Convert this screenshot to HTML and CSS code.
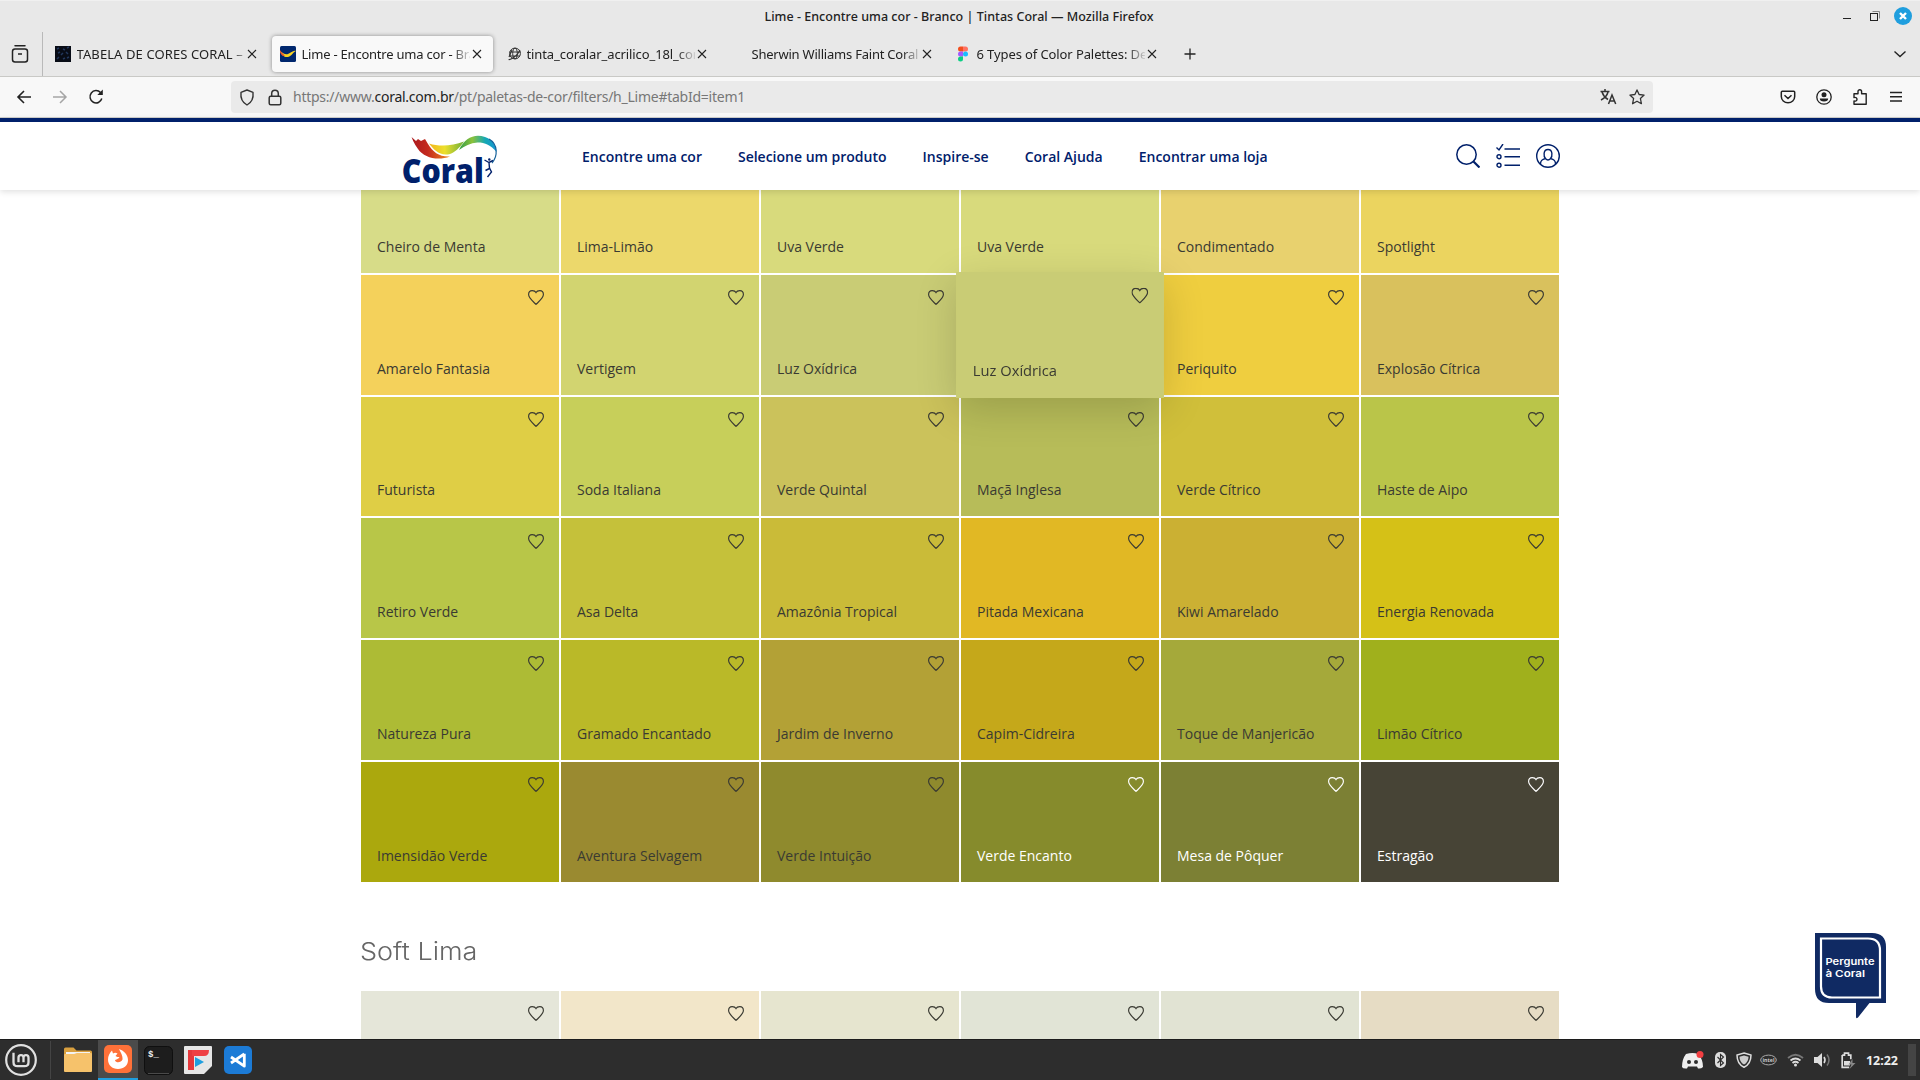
FILE: index.html
```html
<!DOCTYPE html>
<html lang="pt-BR">
<head>
<meta charset="utf-8">
<title>Lime - Encontre uma cor - Branco | Tintas Coral</title>
<link rel="stylesheet" href="styles.css">
</head>
<body>
<svg class="defs" width="0" height="0">
  <symbol id="heart" viewBox="0 0 16 15"><path d="M8 14.400C5 11.400.6 8 .6 4.600.6 2.200 2.200.6 4.200.6 6.100.6 7.300 1.100 8 2.500 8.700 1.100 9.900.6 11.800.6c2 0 3.600 1.600 3.600 4C15.400 8 11 11.400 8 14.400z" fill="none" stroke="currentColor" stroke-width="1.150"/></symbol>
  <symbol id="x" viewBox="0 0 10 10"><path d="M1 1l8 8M9 1l-8 8" stroke="#222" stroke-width="1.100" fill="none"/></symbol>
</svg>

<div class="titlebar">
  <span class="title-side"></span>
  <span class="win-title">Lime - Encontre uma cor - Branco | Tintas Coral — Mozilla Firefox</span>
  <span class="title-side win-buttons">
    <svg width="10" height="12"><path d="M0 8.500h8" stroke="#222"/></svg>
    <svg width="10" height="10"><path d="M2.500.5h7v7" fill="none" stroke="#888"/><rect x=".5" y="2.500" width="7" height="7" fill="none" stroke="#222"/></svg>
    <svg width="18" height="18"><circle cx="9" cy="9" r="9" fill="#1f9ede"/><path d="M6 6l6 6M12 6l-6 6" stroke="#fff" stroke-width="2.400"/></svg>
  </span>
</div>

<div class="tabstrip">
  <div class="firefox-view"><svg width="18" height="20" viewBox="0 0 18 20" fill="none" stroke="#222" stroke-width="1.500"><path d="M4 1.800h10" stroke-linecap="round"/><rect x="1.500" y="5" width="15" height="13" rx="2.500"/><path d="M7 10h4"/></svg></div>
  <div class="tab">
    <svg width="16" height="16"><rect width="16" height="16" fill="#080c16"/><path d="M2 3l2-1M8 3l2 1M12 2l2-1M3 7l2-1M6 9l2-2M11 6l2 2M2 13l2-2M8 13l2-1M12 12l2-1" stroke="#22375c" stroke-width="1.500"/></svg>
    <span class="tab-label whole">TABELA DE CORES CORAL –</span><svg class="tab-x"><use href="#x"/></svg>
  </div>
  <div class="tab active">
    <svg width="16" height="16"><rect width="16" height="16" rx="1.500" fill="#00276e"/><path d="M0 5c3 2 5 4 8 3s5-4 8-3c-3 1-4 5-8 6-4 .6-6-2-8-6z" fill="#f9d423"/><path d="M0 4c2 3 3 4 5 5.500L3 10C1 9 .5 7 0 6z" fill="#e9542a"/></svg>
    <span class="tab-label tight">Lime - Encontre uma cor - Branco</span><svg class="tab-x"><use href="#x"/></svg>
  </div>
  <div class="tab">
    <svg class="globe" width="13" height="14" viewBox="0 0 13 14" fill="none" stroke="#333"><circle cx="7" cy="6.500" r="5.400"/><ellipse cx="7" cy="6.500" rx="2.300" ry="5.400"/><path d="M1.600 5h11M2 9h10M.6 12.500C2 13 9 10 12 3M1 10l3-7" stroke-width="1.100"/></svg>
    <span class="tab-label">tinta_coralar_acrilico_18l_coral</span><svg class="tab-x"><use href="#x"/></svg>
  </div>
  <div class="tab">
    <svg width="16" height="16"></svg>
    <span class="tab-label tight">Sherwin Williams Faint Coral</span><svg class="tab-x"><use href="#x"/></svg>
  </div>
  <div class="tab">
    <svg width="16" height="16" viewBox="0 0 16 16"><path d="M5.500.5H8v5H5.500a2.500 2.500 0 010-5z" fill="#f24e1e"/><path d="M8 .5h2.500a2.500 2.500 0 010 5H8z" fill="#ff7262"/><path d="M5.500 5.500H8v5H5.500a2.500 2.500 0 010-5z" fill="#a259ff"/><circle cx="10.500" cy="8" r="2.500" fill="#1abcfe"/><path d="M5.500 10.500H8V13a2.500 2.500 0 11-2.500-2.500z" fill="#0acf83"/></svg>
    <span class="tab-label">6 Types of Color Palettes: Definition</span><svg class="tab-x"><use href="#x"/></svg>
  </div>
  <svg class="new-tab" width="12" height="12"><path d="M6 .5v11M.5 6h11" stroke="#222" stroke-width="1.300"/></svg>
  <svg class="all-tabs" width="14" height="8" fill="none"><path d="M1.500 1.500L7 6.500l5.500-5" stroke="#222" stroke-width="1.400"/></svg>
</div>

<div class="toolbar">
  <svg class="nav-i" viewBox="0 0 16 16"><path d="M15 8H2M8 2L2 8l6 6" stroke="#222" stroke-width="1.600" fill="none"/></svg>
  <svg class="nav-i" viewBox="0 0 16 16"><path d="M1 8h13M8 2l6 6-6 6" stroke="#a5a5a5" stroke-width="1.500" fill="none"/></svg>
  <svg class="nav-i" viewBox="0 0 16 16"><path d="M13.800 9.500A6 6.200 0 1112.500 3.600" stroke="#222" stroke-width="1.500" fill="none"/><path d="M14.800.5V6H9.300z" fill="#222"/></svg>
  <div class="urlbar">
    <svg width="16" height="17" viewBox="0 0 16 17" fill="none" stroke="#333" stroke-width="1.400"><path d="M8 1l6 2.300c.6 5-1.300 10-6 12.700C3.300 13.300 1.400 8.300 2 3.300z" stroke-linejoin="round"/></svg>
    <svg width="14" height="17" viewBox="0 0 14 17" fill="none" stroke="#333" stroke-width="1.500"><rect x="1.200" y="7.200" width="11.600" height="8.600" rx="1.500"/><path d="M3.700 7V4.500a3.300 3.300 0 016.600 0V7"/></svg>
    <span class="url">https://www.<b>coral.com.br</b>/pt/paletas-de-cor/filters/h_Lime#tabId=item1</span>
    <svg class="translate" width="17" height="16" viewBox="0 0 17 16" fill="none" stroke="#333" stroke-width="1.500"><path d="M.5 2.500h9M5 0v2.500M2 3c1 3 3.500 6 6 7.500M8 3C7 7 4 9.500 1 11M8.500 15l3.500-9 3.700 9M9.800 12h4.500"/></svg>
    <svg width="16" height="16" viewBox="0 0 16 16" fill="none" stroke="#333" stroke-width="1.300" stroke-linejoin="round"><path d="M8 .9l2.100 4.600 5 .6-3.700 3.400 1 5.200L8 12.200l-4.400 2.500 1-5.200L.9 6.100l5-.6z"/></svg>
  </div>
  <div class="tools">
    <svg viewBox="0 0 16 16" fill="none" stroke="#222" stroke-width="1.500"><path d="M2.300 2.200h11.400q1 0 1 1V7.500a6.700 6.300 0 01-13.400 0V3.200q0-1 1-1zM4.500 6.300L8 9.500l3.500-3.200"/></svg>
    <svg viewBox="0 0 16 16"><circle cx="8" cy="8" r="7.200" fill="none" stroke="#222" stroke-width="1.300"/><circle cx="8" cy="5.700" r="2.500" fill="#222"/><path d="M3.800 9.500h8.400q0 3-4.200 3T3.800 9.500z" fill="#222"/></svg>
    <svg viewBox="0 0 16 16" fill="none" stroke="#222" stroke-width="1.400" stroke-linejoin="round"><path d="M2 15.200V12c4 1 4-4.500 0-3.500V4.800h4V2.500a1.800 1.800 0 013.600 0v2.300h4.600v10.400z"/></svg>
    <svg viewBox="0 0 16 16"><path d="M2 3.500h12M2 7.700h12M2 12h12" stroke="#222" stroke-width="1.400"/></svg>
  </div>
</div>

<header class="site-header">
  <svg class="logo" width="96" height="54" viewBox="0 0 96 54">
    <defs>
      <linearGradient id="g1"><stop offset="0" stop-color="#a8171e"/><stop offset=".45" stop-color="#c42a1e"/><stop offset="1" stop-color="#f08a1e"/></linearGradient>
      <linearGradient id="g2"><stop offset="0" stop-color="#f2b51d"/><stop offset=".45" stop-color="#ecdf2c"/><stop offset="1" stop-color="#6fb03a"/></linearGradient>
      <linearGradient id="g3"><stop offset="0" stop-color="#2f9c48"/><stop offset=".35" stop-color="#8cc23a"/><stop offset=".7" stop-color="#14a7b5"/><stop offset="1" stop-color="#1796d2"/></linearGradient>
    </defs>
    <path d="M6.500 0l2 5 4.500 4 2-2 3 2 4-2 3 5c5 8 11 13 22 12.500-12 4.500-26 1.500-32-7.500C11 12 9 6 6.500 0z" fill="url(#g1)"/>
    <path d="M26 11.500c11 3.500 23 2.500 35-2-5 7-9 10.500-14 12.500C37 24.500 31 18 26 11.500z" fill="url(#g2)"/>
    <path d="M56 18C62 6 71 1.500 82 5c7 2.500 11 7 11.500 15-6-7-11-9.500-19-9.500-7 .5-13 3.500-18.500 7.500z" fill="url(#g3)"/>
    <path d="M86 7c9 5 9 17 3 24" fill="none" stroke="#17629a" stroke-width="1.200"/>
    <path d="M81.500 28l4.500 2.500 4-2M86 30.500l.5 6-4 2M86.500 36l2 4-4 5" fill="none" stroke="#00206b" stroke-width="1.400"/>
    <circle cx="86.300" cy="27.500" r="1.200" fill="#00206b"/>
    <text x="-1.300" y="51" class="logo-text" textLength="82" lengthAdjust="spacingAndGlyphs">Coral</text>
  </svg>
  <nav class="menu"><span>Encontre uma cor</span><span>Selecione um produto</span><span>Inspire-se</span><span>Coral Ajuda</span><span>Encontrar uma loja</span></nav>
  <div class="header-icons">
    <svg width="24" height="24" fill="none" stroke="#00206b"><circle cx="10.500" cy="10.500" r="9.700" stroke-width="1.500"/><path d="M17.500 17.500l6 6" stroke-width="2.200"/></svg>
    <svg width="24" height="24" fill="none" stroke="#00206b" stroke-width="1.400"><path d="M.5 3.500L3 6l4-6M8.500 5H24M8.500 12.700H24M8.500 21.200H24"/><circle cx="3" cy="12.700" r="2"/><circle cx="3" cy="21.200" r="2"/></svg>
    <svg width="24" height="24" fill="none" stroke="#00206b" stroke-width="1.400"><circle cx="12" cy="12" r="11.300"/><path d="M4.500 20c0-3.500 1.500-4.500 5-5.500-2-2-2.500-9 2.500-9s4.500 7 2.500 9c3.500 1 5 2 5 5.500M9.500 14.500q2.500 3 5 0"/></svg>
  </div>
</header>

<main class="page">
  <section class="palette first">
    <a class="tile" style="background:#d7dc88"><svg><use href="#heart"/></svg><span>Cheiro de Menta</span></a>
    <a class="tile" style="background:#ecd86b"><svg><use href="#heart"/></svg><span>Lima-Limão</span></a>
    <a class="tile" style="background:#d8da7c"><svg><use href="#heart"/></svg><span>Uva Verde</span></a>
    <a class="tile" style="background:#d8da7c"><svg><use href="#heart"/></svg><span>Uva Verde</span></a>
    <a class="tile" style="background:#e8d16e"><svg><use href="#heart"/></svg><span>Condimentado</span></a>
    <a class="tile" style="background:#ebd45f"><svg><use href="#heart"/></svg><span>Spotlight</span></a>

    <a class="tile" style="background:#f4d15b"><svg><use href="#heart"/></svg><span>Amarelo Fantasia</span></a>
    <a class="tile" style="background:#d2d470"><svg><use href="#heart"/></svg><span>Vertigem</span></a>
    <a class="tile" style="background:#c9cc75"><svg><use href="#heart"/></svg><span>Luz Oxídrica</span></a>
    <a class="tile hovered" style="background:#c9cc75"><svg><use href="#heart"/></svg><span>Luz Oxídrica</span></a>
    <a class="tile" style="background:#efce3f"><svg><use href="#heart"/></svg><span>Periquito</span></a>
    <a class="tile" style="background:#d9c15d"><svg><use href="#heart"/></svg><span>Explosão Cítrica</span></a>

    <a class="tile" style="background:#dfce45"><svg><use href="#heart"/></svg><span>Futurista</span></a>
    <a class="tile" style="background:#c7cf5a"><svg><use href="#heart"/></svg><span>Soda Italiana</span></a>
    <a class="tile" style="background:#cbc25b"><svg><use href="#heart"/></svg><span>Verde Quintal</span></a>
    <a class="tile" style="background:#b7bc59"><svg><use href="#heart"/></svg><span>Maçã Inglesa</span></a>
    <a class="tile" style="background:#d0bf3a"><svg><use href="#heart"/></svg><span>Verde Cítrico</span></a>
    <a class="tile" style="background:#bac549"><svg><use href="#heart"/></svg><span>Haste de Aipo</span></a>

    <a class="tile" style="background:#b8c648"><svg><use href="#heart"/></svg><span>Retiro Verde</span></a>
    <a class="tile" style="background:#c5c13a"><svg><use href="#heart"/></svg><span>Asa Delta</span></a>
    <a class="tile" style="background:#cabb38"><svg><use href="#heart"/></svg><span>Amazônia Tropical</span></a>
    <a class="tile" style="background:#e1b824"><svg><use href="#heart"/></svg><span>Pitada Mexicana</span></a>
    <a class="tile" style="background:#cbb033"><svg><use href="#heart"/></svg><span>Kiwi Amarelado</span></a>
    <a class="tile" style="background:#d5c117"><svg><use href="#heart"/></svg><span>Energia Renovada</span></a>

    <a class="tile" style="background:#adbb35"><svg><use href="#heart"/></svg><span>Natureza Pura</span></a>
    <a class="tile" style="background:#bab928"><svg><use href="#heart"/></svg><span>Gramado Encantado</span></a>
    <a class="tile" style="background:#b3a136"><svg><use href="#heart"/></svg><span>Jardim de Inverno</span></a>
    <a class="tile" style="background:#c5a81a"><svg><use href="#heart"/></svg><span>Capim-Cidreira</span></a>
    <a class="tile" style="background:#a5a93a"><svg><use href="#heart"/></svg><span>Toque de Manjericão</span></a>
    <a class="tile" style="background:#a0b01c"><svg><use href="#heart"/></svg><span>Limão Cítrico</span></a>

    <a class="tile" style="background:#aba80d"><svg><use href="#heart"/></svg><span>Imensidão Verde</span></a>
    <a class="tile" style="background:#9a8a30"><svg><use href="#heart"/></svg><span>Aventura Selvagem</span></a>
    <a class="tile" style="background:#8f8a2d"><svg><use href="#heart"/></svg><span>Verde Intuição</span></a>
    <a class="tile light" style="background:#868b2c"><svg><use href="#heart"/></svg><span>Verde Encanto</span></a>
    <a class="tile light" style="background:#7c8034"><svg><use href="#heart"/></svg><span>Mesa de Pôquer</span></a>
    <a class="tile light" style="background:#474436"><svg><use href="#heart"/></svg><span>Estragão</span></a>
  </section>
  <h2 class="heading"><span>Soft Lima</span></h2>
  <section class="palette">
    <a class="tile" style="background:#e5e6d9"><svg><use href="#heart"/></svg></a>
    <a class="tile" style="background:#f2e6c9"><svg><use href="#heart"/></svg></a>
    <a class="tile" style="background:#e6e5cf"><svg><use href="#heart"/></svg></a>
    <a class="tile" style="background:#e1e4d6"><svg><use href="#heart"/></svg></a>
    <a class="tile" style="background:#e1e3d3"><svg><use href="#heart"/></svg></a>
    <a class="tile" style="background:#e6dcc4"><svg><use href="#heart"/></svg></a>
  </section>
  <svg class="chat" width="71" height="86" viewBox="0 0 71 86">
    <path d="M0 0h57q14 0 14 14v56H54.500L43 84.500q-2 1.500-2-.5V70H14Q0 70 0 56z" fill="#102a63"/>
    <path d="M6 5.500h47q12 0 12 12V64.500H17q-11 0-11-11z" fill="none" stroke="#fff" stroke-width="2.200"/>
    <text x="10.500" y="32" textLength="49" lengthAdjust="spacingAndGlyphs">Pergunte</text><text x="10.500" y="43.500" textLength="39.500" lengthAdjust="spacingAndGlyphs">à Coral</text>
  </svg>
</main>

<footer class="taskbar">
  <svg class="mint" width="32" height="32" fill="none" stroke="#e0e0e0"><circle cx="16" cy="16" r="14.800" stroke-width="2.200"/><path d="M8.500 9v9.500q0 4 4 4h7q4 0 4-4V14q0-2.500-2.500-2.500T18.500 14v4.500M18.500 14q0-2.500-2.500-2.500T13.500 14v4.500" transform="translate(0 -.3)" stroke-width="2.300"/></svg>
  <i class="sep"></i>
  <div class="launchers">
    <div><svg width="28" height="28"><path d="M0 3q0-1.500 1.500-1.500h8l3 3H26.500q1.500 0 1.500 1.500v8H0z" fill="#d9a03f"/><path d="M2 6h24v4H2z" fill="#f3f3f3"/><path d="M0 9q0-1 1-1h9l3-1h14q1 0 1 1v17q0 1-1 1H1q-1 0-1-1z" fill="#f6c26b"/></svg></div>
    <div class="running"><svg width="28" height="28"><rect width="28" height="28" rx="5" fill="#ff7139"/><path d="M14 24c-6 0-10-4-10-9.500C4 11 5.500 8 8 5.500l1 3c1.500-1 3-1 4.500 0l-2 2.500c1 1 3 1 4 1-1 2.500-4 2-4.500 3.500 1 2.500 6 2.500 7.500-1C19 11 16.500 7 15 4c4.500 1.500 9 5.500 9 11 0 5.500-4 9-10 9z" fill="#fff"/></svg></div>
    <div><svg width="29" height="29"><rect x=".5" y=".5" width="28" height="28" rx="5" fill="#1d1d1d" stroke="#0f0f0f"/><path d="M4 27.500h21" stroke="#4a4a4a"/><text x="4" y="10.500" class="prompt">$_</text></svg></div>
    <div><svg width="28" height="28"><path d="M1 0h26q1 0 1 1v19l-8 8H1q-1 0-1-1V1q0-1 1-1z" fill="#e6e6e6"/><path d="M4 4h6v20H4z" fill="#e5383b"/><path d="M8 4h17q0 6-5 6H8z" fill="#ef4043"/><path d="M11 11l9 5-9 5z" fill="#1f9fe0"/></svg></div>
    <div><svg width="28" height="28"><rect width="28" height="28" rx="5" fill="#1c7bd6"/><path d="M20.300 7.800v12.400L7 11M20.300 7.800L7 17" fill="none" stroke="#fff" stroke-width="2.800" stroke-linejoin="round"/></svg></div>
  </div>
  <div class="tray">
    <svg class="discord" width="23" height="18"><path d="M5 3q7-2 12 0 5 5 5 13-2 2-5 1.500l-1-2H7l-1 2Q2 18 1 16 1 8 5 3z" fill="#eee"/><circle cx="8" cy="11" r="2" fill="#2d2d2d"/><circle cx="15" cy="11" r="2" fill="#2d2d2d"/><circle cx="19" cy="3.500" r="3.500" fill="#f23f42"/></svg>
    <svg width="11" height="16"><rect width="11" height="16" rx="5" fill="#ddd"/><path d="M2.500 5l6 6L5.500 13.500v-11L8.500 5l-6 6" fill="none" stroke="#2d2d2d" stroke-width="1.100"/></svg>
    <svg class="shield" width="16" height="16" fill="none"><path d="M8 1l7 2q0 9-7 12.200Q1 12 1 3z" stroke="#ddd" stroke-width="1.500"/><path d="M8 3.500l4.500 1.200Q12.500 10 8 12.500 3.500 10 3.500 4.700z" fill="#ccc"/></svg>
    <svg width="17" height="12"><ellipse cx="8.500" cy="6" rx="7.800" ry="4.900" fill="none" stroke="#aaa"/><text x="2.500" y="8" class="intel" textLength="12" lengthAdjust="spacingAndGlyphs">intel</text></svg>
    <svg width="17" height="14" fill="none" stroke-width="1.800"><path d="M1 5q7.500-6.500 15 0" stroke="#777"/><path d="M3.500 7.500q5-4 10 0M5.500 10q3-2.500 6 0" stroke="#ddd"/><circle cx="8.500" cy="12" r="1.500" fill="#ddd"/></svg>
    <svg width="17" height="16"><path d="M0 5h3.500L8 1v14l-4.500-4H0z" fill="#ddd"/><path d="M10 5q2 3 0 6" stroke="#ddd" stroke-width="1.600" fill="none"/><path d="M13 2.500q4 5.500 0 11" stroke="#777" stroke-width="1.500" fill="none"/></svg>
    <svg width="15" height="17"><path d="M1.200 3.200h2.300V1.200h4v2h2.300v4M1.200 3v12.300h7" fill="none" stroke="#ddd" stroke-width="1.700"/><path d="M3 9h6v4.500H3z" fill="#ddd"/><path d="M11.500 7L7.500 12.500h3L8.500 17l6-6h-3z" fill="#888"/></svg>
    <span class="clock">12:22</span>
    <i class="show-desktop"></i>
  </div>
</footer>
</body>
</html>
```
FILE: styles.css
```css
* { box-sizing: border-box; }
body { margin: 0; width: 1920px; height: 1080px; overflow: hidden; display: flex; flex-direction: column; background: #fff; font-family: "Open Sans", "Noto Sans", sans-serif; }
svg { flex: none; display: block; }
.defs { position: absolute; }

.titlebar { height: 33px; flex: none; display: flex; align-items: center; background: #e8e8e8; border-top: 1px solid #f0f0f0; padding-bottom: 2px; }
.title-side { flex: 1 1 0; min-width: 0; }
.win-title { margin: 0 -3px 0 3px; font: 500 12.5px "Noto Sans", sans-serif; letter-spacing: .03px; color: #222; white-space: nowrap; }
.win-buttons { display: flex; justify-content: flex-end; align-items: center; gap: 17px; padding-right: 8px; }
.win-buttons svg:nth-child(2) { margin-right: -3px; }

.tabstrip { height: 44px; flex: none; display: flex; align-items: center; background: #e8e8e8; border-bottom: 1px solid #c9c9c6; padding: 0 13px 1px 0; }
.firefox-view { width: 43px; height: 44px; border-right: 1px solid #b9b9b9; display: flex; align-items: center; padding-left: 11px; }
.tab { width: 221px; height: 36px; margin-left: 4px; display: flex; align-items: center; padding: 0 11px 0 8px; border-radius: 4px; }
.tab.active { background: #f9f9f9; box-shadow: 0 0 4px rgba(0,0,0,.4); }
.globe { margin-left: 3px; }
.tab-label { flex: none; width: 168px; height: 20px; margin-left: 5.5px; overflow: hidden; white-space: nowrap; font: 13px/20px "Noto Sans", sans-serif; letter-spacing: -.1px; color: #222; -webkit-mask-image: linear-gradient(90deg, #000 150px, rgba(0,0,0,.12) 168px); mask-image: linear-gradient(90deg, #000 150px, rgba(0,0,0,.12) 168px); }
.tab-label.tight { letter-spacing: -.22px; }
.tab-label.whole { letter-spacing: .1px; -webkit-mask-image: linear-gradient(90deg, #000 155px, rgba(0,0,0,.3) 168px); mask-image: linear-gradient(90deg, #000 155px, rgba(0,0,0,.3) 168px); }
.tab-x { width: 10px; height: 10px; margin-left: auto; }
.new-tab { margin-left: 16px; }
.all-tabs { margin-left: auto; }

.toolbar { height: 41px; flex: none; display: flex; align-items: center; background: #f8f8f8; border-bottom: 1px solid #cfcfcc; padding: 0 16px; }
.nav-i { width: 16px; height: 16px; margin-right: 20px; }
.urlbar { width: 1422px; height: 32px; margin-left: 107px; background: #eaeaea; border-radius: 4px; display: flex; align-items: center; padding: 0 8px; }
.urlbar svg:nth-child(2) { margin-left: 13px; }
.url { margin: -1px 0 0 11px; font: 14px "Noto Sans", sans-serif; letter-spacing: -.25px; color: #777; white-space: nowrap; }
.url b { font-weight: 400; color: #222; }
.translate { margin-left: auto; margin-right: 12px; }
.tools { margin-left: auto; display: flex; gap: 20px; }
.tools svg { width: 16px; height: 16px; }

.site-header { position: relative; z-index: 5; height: 72px; flex: none; border-top: 4px solid #00206b; background: #fff; box-shadow: 0 2px 6px rgba(0,0,0,.12); display: flex; align-items: center; padding: 0 360px 0 403px; }
.logo { margin-top: 5px; overflow: visible; }
.logo-text { font: 800 34px "Open Sans", sans-serif; fill: #00206b; }
.menu { display: flex; gap: 36px; margin-left: 83px; font-size: 14px; font-weight: 600; color: #00206b; white-space: nowrap; }
.header-icons { margin-left: auto; display: flex; gap: 16px; }

.page { position: relative; height: 849px; flex: none; overflow: hidden; }
.palette { display: grid; grid-template-columns: repeat(6, 198px); grid-auto-rows: 119.8px; gap: 2px; margin-left: 361px; }
.palette.first { margin-top: -37px; }
.tile { position: relative; display: flex; flex-direction: column; justify-content: space-between; padding: 15.4px 15px 16px 16px; font-size: 14px; line-height: 20px; color: #3a3a32; }
.tile svg { width: 16px; height: 15px; align-self: flex-end; }
.tile.light { color: #fff; }
.tile.hovered { transform: scale(1.05); z-index: 2; box-shadow: 0 10px 40px rgba(0,0,0,.16); }
.heading { margin: 54px 0 24.2px 360px; height: 31px; font: 300 24px/31px "Inter", sans-serif; color: #666; }
.heading span { display: inline-block; transform: scaleX(1.125); transform-origin: 0 50%; }
.chat { position: absolute; left: 1815px; top: 743px; }
.chat text { font: 600 9.5px "Inter", sans-serif; fill: #fff; }

.taskbar { height: 41px; flex: none; display: flex; align-items: center; background: #2d2d2d; border-top: 1px solid #1c1c1c; padding: 0 4px 0 5px; }
.sep { width: 1px; height: 38px; margin-left: 13px; background: #444; }
.launchers { display: flex; height: 40px; margin-left: 7px; }
.launchers div { width: 40px; display: flex; align-items: center; justify-content: center; }
.launchers .running { background: #4b4b4b; border-bottom: 2px solid #1f9ede; }
.prompt { font: bold 9px "Liberation Mono", monospace; fill: #eee; }
.tray { margin-left: auto; display: flex; align-items: center; gap: 10px; height: 40px; }
.discord { margin-right: 1.5px; }
.shield { margin-right: -2.5px; }
.intel { font: bold 5.5px "Open Sans", sans-serif; fill: #ccc; }
.clock { font: 700 12.5px "Noto Sans", sans-serif; color: #eee; }
.show-desktop { width: 8px; height: 32px; background: #444; }
```
